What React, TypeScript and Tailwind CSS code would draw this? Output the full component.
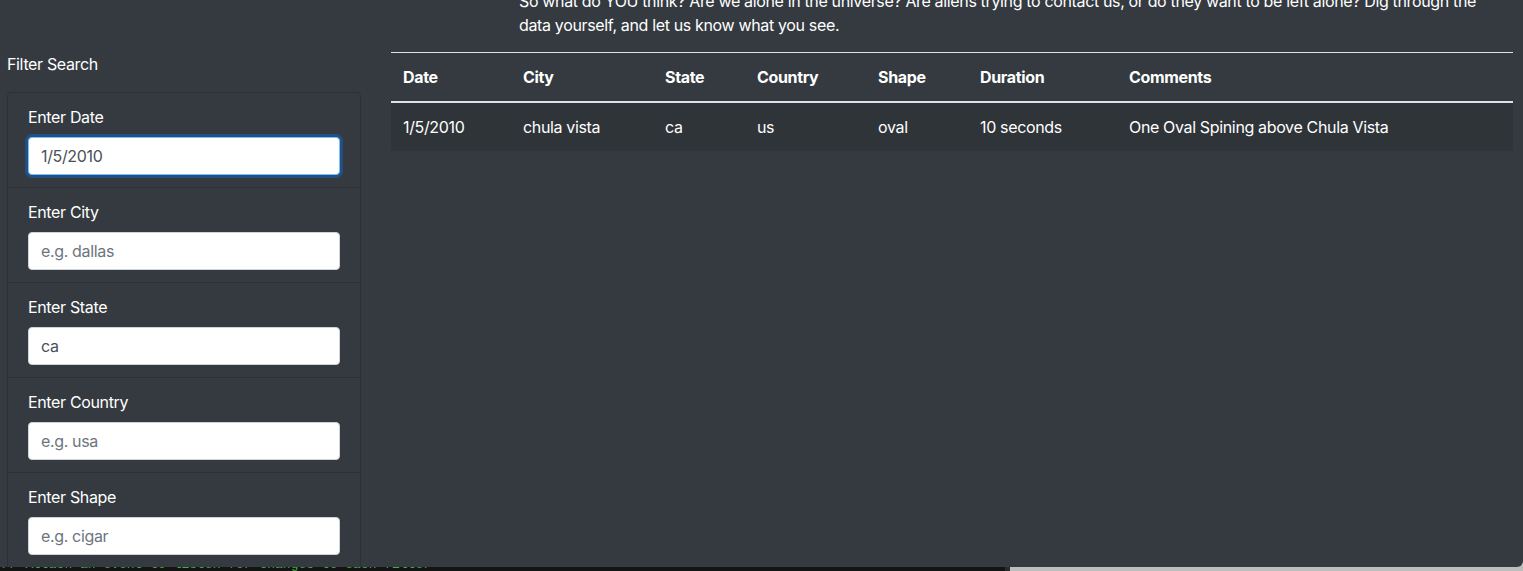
import React from 'react';

const filters = [
  { label: 'Enter Date', placeholder: '1/1/2010', value: '1/5/2010', focused: true },
  { label: 'Enter City', placeholder: 'e.g. dallas', value: '' },
  { label: 'Enter State', placeholder: 'e.g. ca', value: 'ca' },
  { label: 'Enter Country', placeholder: 'e.g. usa', value: '' },
  { label: 'Enter Shape', placeholder: 'e.g. cigar', value: '' },
];

const columns = [
  { name: 'Date', w: 'w-[120px]' },
  { name: 'City', w: 'w-[142px]' },
  { name: 'State', w: 'w-[92px]' },
  { name: 'Country', w: 'w-[121px]' },
  { name: 'Shape', w: 'w-[102px]' },
  { name: 'Duration', w: 'w-[149px]' },
  { name: 'Comments', w: 'w-auto' },
];

const rows = [['1/5/2010', 'chula vista', 'ca', 'us', 'oval', '10 seconds', 'One Oval Spining above Chula Vista']];

export default function App() {
  return (
    <div className="w-[1523px] h-[571px] overflow-hidden bg-[#bdbdbd] tracking-[-0.35px]" style={{ fontFamily: 'Inter, "Liberation Sans", sans-serif' }}>
      <div className="h-[567px] overflow-hidden bg-[#343a40] rounded-br-[6px] text-white text-[16px] leading-6 flex">
        {/* Filters */}
        <aside className="w-[354px] ml-[7px] pt-[52px] shrink-0">
          <div className="mb-[16px]">Filter Search</div>
          <ul className="border border-[#2c3136] rounded-t-[4px]">
            {filters.map((f, i) => (
              <li key={i} className={`px-5 py-3 ${i > 0 ? 'border-t border-[#2c3136]' : ''}`}>
                <label className="block mb-2">{f.label}</label>
                <input
                  readOnly
                  defaultValue={f.value}
                  placeholder={f.placeholder}
                  className={`block w-full h-[38px] px-3 rounded-[4px] bg-white text-[#495057] placeholder:text-[#6c757d] outline-none border ${
                    f.focused ? 'border-[#80bdff] shadow-[0_0_0_3px_rgba(0,123,255,0.35)]' : 'border-[#ced4da]'
                  }`}
                />
              </li>
            ))}
          </ul>
        </aside>

        {/* Results */}
        <main className="ml-[30px] w-[1122px] shrink-0">
          <p className="-mt-[11px] mb-[15px] pl-[128px] pr-[20px] text-white">
            So what do YOU think? Are we alone in the universe? Are aliens trying to contact us, or do they want to be left alone? Dig through the data yourself, and let us know what you see.
          </p>
          <table className="w-full border-collapse text-left">
            <thead>
              <tr className="border-t border-[#dee2e6] border-b-2 border-b-[#dee2e6]">
                {columns.map(c => (
                  <th key={c.name} className={`${c.w} px-3 py-3 font-bold`}>{c.name}</th>
                ))}
              </tr>
            </thead>
            <tbody>
              {rows.map((r, i) => (
                <tr key={i} className="bg-[#2f3439]">
                  {r.map((v, j) => (
                    <td key={j} className="px-3 py-3">{v}</td>
                  ))}
                </tr>
              ))}
            </tbody>
          </table>
        </main>
      </div>

      {/* Bottom strip */}
      <div className="h-[4px] flex">
        <div className="w-[1005px] bg-[#141414] overflow-hidden">
          <div className="-mt-[9px] pl-[2px] text-[13px] leading-[14px] tracking-normal text-[#3fae3f] whitespace-nowrap" style={{ fontFamily: '"Liberation Mono", monospace' }}>
            // Attach an event to listen for changes to each filter
          </div>
        </div>
        <div className="w-[5px] bg-[#2a2a2a]" />
        <div className="flex-1 bg-[#bdbdbd]" />
      </div>
    </div>
  );
}
